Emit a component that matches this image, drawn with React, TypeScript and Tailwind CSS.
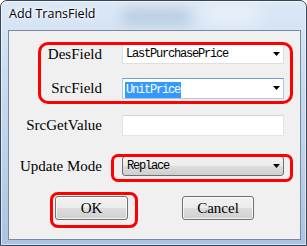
import React from 'react';

const Arrow: React.FC = () => (
  <svg width="7" height="4" viewBox="0 0 7 4" className="shrink-0">
    <polygon points="0,0 7,0 3.5,4" fill="#000" />
  </svg>
);

const labelCls = 'w-[93px] text-right text-[15px] leading-none text-black';
const monoCls = "font-['Liberation_Mono',monospace] text-[12px] tracking-[-1.2px] leading-none text-black";

export default function App() {
  return (
    <div
      className="relative w-[307px] h-[246px] overflow-hidden rounded-t-[7px] border border-[#3a4658] bg-[linear-gradient(180deg,#dbe8f6_0%,#c7dbef_35%,#b9d0ea_70%,#a9c3e2_100%)] shadow-[inset_0_0_0_1px_rgba(255,255,255,0.55)] font-['Liberation_Serif',serif]"
    >
      {/* blurred glass smudges */}
      <div className="absolute left-[120px] top-[8px] w-[70px] h-[16px] rounded-full bg-[#9fb6cf] opacity-50 blur-[6px]" />
      <div className="absolute left-[200px] top-[2px] w-[60px] h-[24px] rounded-full bg-white opacity-40 blur-[8px]" />

      <div className="relative h-[29px] pl-[8px] pt-[7px] text-[12.5px] leading-none text-black font-['Open_Sans',sans-serif] [text-shadow:0_0_6px_#fff,0_0_3px_#fff]">
        Add TransField
      </div>

      <div className="relative ml-[7px] w-[293px] h-[210px] border border-[#7a899c] bg-[#f0f0f0] flex flex-col">
        {/* DesField */}
        <div className="mt-[13px] h-[20px] flex items-center">
          <div className={labelCls}>DesField</div>
          <div className="ml-[20px] w-[162px] h-[20px] flex items-center bg-white border border-[#dcdfe3] border-t-[#c6cacf] pl-[3px] pr-[3px]">
            <span className={`${monoCls} flex-1`}>LastPurchasePrice</span>
            <Arrow />
          </div>
        </div>

        {/* SrcField */}
        <div className="mt-[14px] h-[20px] flex items-center">
          <div className={labelCls}>SrcField</div>
          <div className="ml-[20px] w-[162px] h-[21px] flex items-center bg-white border border-[#a8c8e8] border-t-[#6f9fcf] pl-[2px] pr-[3px]">
            <div className="flex-1">
              <span className={`${monoCls} inline-block bg-[#3399ff] text-white px-[1px] py-[2px]`}>UnitPrice</span>
            </div>
            <Arrow />
          </div>
        </div>

        {/* SrcGetValue */}
        <div className="mt-[17px] h-[20px] flex items-center">
          <div className={labelCls}>SrcGetValue</div>
          <div className="ml-[20px] w-[162px] h-[21px] bg-white border border-[#e2e4e7] border-t-[#d0d3d7]" />
        </div>

        {/* Update Mode */}
        <div className="mt-[21px] h-[20px] flex items-center">
          <div className={labelCls}>Update Mode</div>
          <div className="ml-[20px] w-[162px] h-[20px] flex items-center rounded-[3px] border border-[#707070] bg-[linear-gradient(180deg,#f2f2f2_0%,#ebebeb_50%,#dddddd_51%,#cfcfcf_100%)] pl-[4px] pr-[3px]">
            <span className={`${monoCls} flex-1`}>Replace</span>
            <Arrow />
          </div>
        </div>

        {/* Buttons */}
        <div className="mt-[20px] flex items-center pl-[46px] gap-[54px]">
          <button className="w-[73px] h-[24px] rounded-[3px] border border-[#707070] bg-[linear-gradient(180deg,#f2f2f2_0%,#ebebeb_50%,#dddddd_51%,#cfcfcf_100%)] shadow-[inset_0_0_0_1px_rgba(255,255,255,0.7)] text-[15px] leading-none text-black">
            OK
          </button>
          <button className="w-[72px] h-[24px] rounded-[3px] border border-[#707070] bg-[linear-gradient(180deg,#f2f2f2_0%,#ebebeb_50%,#dddddd_51%,#cfcfcf_100%)] shadow-[inset_0_0_0_1px_rgba(255,255,255,0.7)] text-[15px] leading-none text-black">
            Cancel
          </button>
        </div>
      </div>

      {/* red annotation outlines */}
      <div className="absolute left-[37px] top-[41px] w-[255px] h-[62px] rounded-[10px] border-[3px] border-[#ff0000]" />
      <div className="absolute left-[110px] top-[153px] w-[182px] h-[28px] rounded-[7px] border-[3px] border-[#ff0000]" />
      <div className="absolute left-[49px] top-[191px] w-[88px] h-[36px] rounded-[8px] border-[3px] border-[#ff0000]" />
    </div>
  );
}
